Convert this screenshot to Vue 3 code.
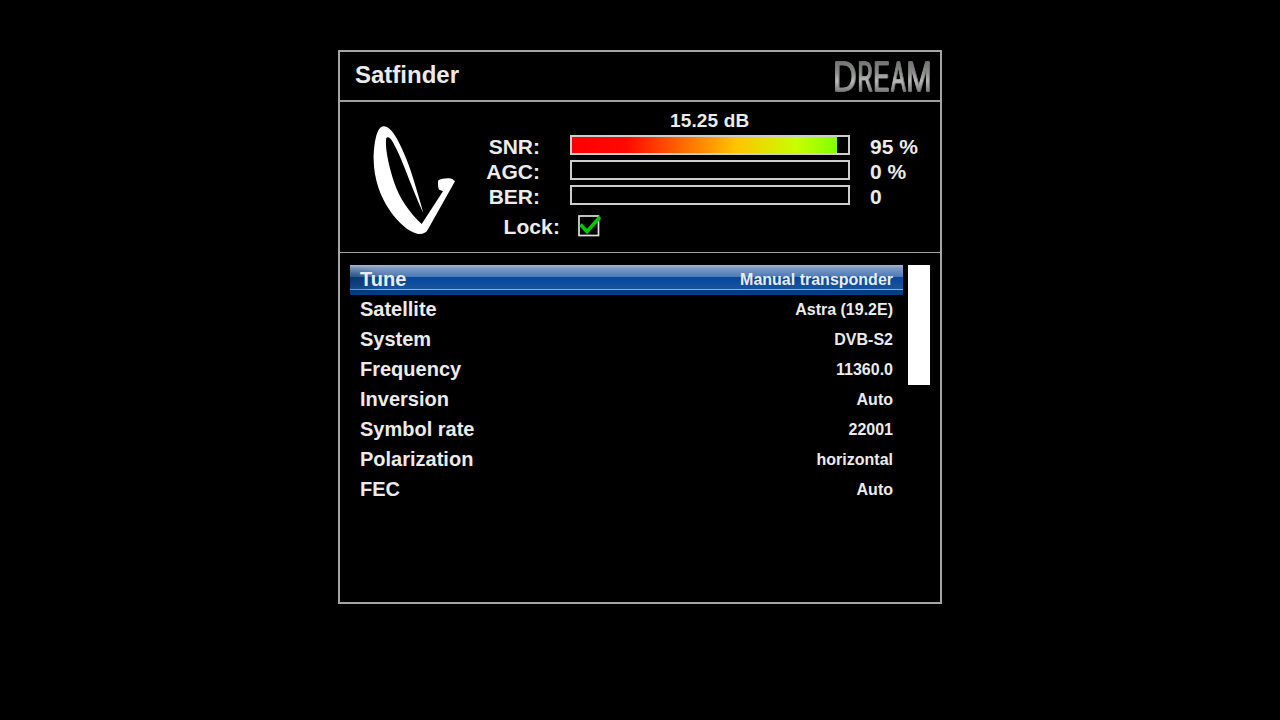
<script setup>
const signals = [
  { label: 'SNR:', level: 96, value: '95 %' },
  { label: 'AGC:', level: 0, value: '0 %' },
  { label: 'BER:', level: 0, value: '0' }
]

const settings = [
  { name: 'Tune', value: 'Manual transponder' },
  { name: 'Satellite', value: 'Astra (19.2E)' },
  { name: 'System', value: 'DVB-S2' },
  { name: 'Frequency', value: '11360.0' },
  { name: 'Inversion', value: 'Auto' },
  { name: 'Symbol rate', value: '22001' },
  { name: 'Polarization', value: 'horizontal' },
  { name: 'FEC', value: 'Auto' }
]

// letters of the logo have uneven widths
const letters = [
  { char: 'D', x: 3.5, width: 24 },
  { char: 'R', x: 28, width: 15 },
  { char: 'E', x: 43.5, width: 17 },
  { char: 'A', x: 61.5, width: 15 },
  { char: 'M', x: 77, width: 25 }
]

const selected = 0
</script>

<template>
  <div class="screen">
    <main class="window">
      <header class="title-bar">
        <h1>Satfinder</h1>
        <svg class="logo" width="106" height="46" viewBox="0 0 106 46">
          <defs>
            <linearGradient id="metal" gradientUnits="userSpaceOnUse" x1="0" y1="6" x2="0" y2="40">
              <stop offset="0" stop-color="#6c6e6c" />
              <stop offset="0.4" stop-color="#8c8e8c" />
              <stop offset="0.65" stop-color="#b8bab8" />
              <stop offset="1" stop-color="#707270" />
            </linearGradient>
          </defs>
          <text
            v-for="l in letters"
            :key="l.char"
            :x="l.x"
            y="37.5"
            :textLength="l.width"
            lengthAdjust="spacingAndGlyphs"
          >{{ l.char }}</text>
        </svg>
      </header>

      <section class="signal">
        <svg class="dish" width="110" height="130" viewBox="0 0 330 390">
          <path
            fill="#fff"
            fill-rule="evenodd"
            d="M70 34 C84 34 98 48 110 70 C134 114 150 158 161 195 C171 229 181 260 190 294 C176 265 162 231 148 195 C132 153 117 113 98 80 C91 68 78 60 78 76 C76 108 88 158 102 201 C119 251 147 291 185 327 L249 229 C245 225 239 227 236 222 C234 214 233 202 235 196 C243 190 269 188 277 192 L285 199 L204 343 C198 354 190 358 174 357 C145 351 113 321 91 289 C60 244 42 191 41 135 C41 91 49 35 70 34Z"
          />
        </svg>
        <div class="meters">
          <div class="level">15.25 dB</div>
          <div v-for="item in signals" :key="item.label" class="meter-row">
            <label>{{ item.label }}</label>
            <div class="bar">
              <div class="bar-fill" :style="{ width: item.level + '%' }"></div>
            </div>
            <span class="reading">{{ item.value }}</span>
          </div>
          <div class="lock-row">
            <label>Lock:</label>
            <svg width="26" height="24" viewBox="0 0 26 24">
              <rect x="2" y="3" width="19.5" height="19.5" fill="none" stroke="#e0e0e0" stroke-width="1.7" />
              <path d="M3.5 11.5 L10 18.5 L23 4" fill="none" stroke="#00c800" stroke-width="3.6" />
            </svg>
          </div>
        </div>
      </section>

      <section class="config">
        <ul>
          <li v-for="(item, i) in settings" :key="item.name" :class="{ active: i === selected }">
            <span class="name">{{ item.name }}</span>
            <span class="value">{{ item.value }}</span>
          </li>
        </ul>
        <div class="scrollbar"></div>
      </section>
    </main>
  </div>
</template>

<style>
body {
  background: #000;
}
</style>

<style scoped>
.screen {
  box-sizing: border-box;
  height: 720px;
  padding-top: 50px;
  background: #000;
  color: #ebebeb;
  font-family: "Liberation Sans", Arial, sans-serif;
  font-weight: bold;
}
.window {
  box-sizing: border-box;
  width: 604px;
  height: 554px;
  margin: 0 auto;
  border: 2px solid #a5a5a5;
}
.title-bar {
  display: flex;
  justify-content: space-between;
  height: 48px;
  padding: 0 5px 0 15px;
  border-bottom: 2px solid #a0a0a0;
}
h1 {
  margin: 0;
  font-size: 24px;
  line-height: 46px;
}
.logo {
  margin-top: 1px;
  overflow: visible;
  filter: drop-shadow(1px 0.5px 0.5px #777);
}
.logo text {
  font-family: Inter, "Liberation Sans", sans-serif;
  font-size: 40px;
  font-weight: 300;
  fill: url(#metal);
  stroke: url(#metal);
  stroke-width: 1.4px;
  stroke-linejoin: round;
}
.signal {
  box-sizing: border-box;
  display: flex;
  height: 151px;
  padding-left: 20px;
  border-bottom: 1px solid #a0a0a0;
}
.dish {
  margin-top: 13px;
}
.meters {
  width: 470px;
}
.level {
  height: 31px;
  padding-left: 200px;
  font-size: 19px;
  line-height: 38px;
  letter-spacing: 0.15px;
}
.meter-row {
  display: flex;
  height: 25px;
  font-size: 21px;
  line-height: 28px;
}
.meter-row label {
  width: 70px;
  margin-right: 30px;
  text-align: right;
}
.bar {
  box-sizing: border-box;
  width: 280px;
  height: 20px;
  margin: 2px 20px 0 0;
  border: 2px solid #cdcdcd;
}
.bar-fill {
  height: 100%;
  background: linear-gradient(90deg, #f00 0, #ff0800 54px, #ffc400 164px, #c8ff00 224px, #80ff00 266px) no-repeat;
  background-size: 276px 100%;
}
.lock-row {
  display: flex;
  padding-top: 5px;
  font-size: 21px;
  line-height: 28px;
}
.lock-row label {
  width: 90px;
  margin-right: 17px;
  text-align: right;
  letter-spacing: 0.1px;
}
.config {
  display: flex;
  gap: 5px;
  padding: 12px 10px;
}
ul {
  width: 553px;
  margin: 0;
  padding: 0;
  list-style: none;
}
li {
  display: flex;
  justify-content: space-between;
  height: 30px;
  padding: 0 10px;
  font-size: 20px;
  line-height: 29px;
}
.value {
  font-size: 16px;
}
.active {
  background:
    radial-gradient(ellipse 36px 14px at 0 15px, rgba(16, 40, 72, 0.6), rgba(16, 40, 72, 0)),
    linear-gradient(
      #b0bdd4 0, #9aacca 1px, #7f9bc4 3px, #4a78b4 12px,
      #004a9c 12px, #1c529c 24px,
      #9aaed0 24px, #9aaed0 25px,
      #003c80 25px, #003c80 30px
    );
}
.scrollbar {
  width: 22px;
  height: 120px;
  background: #fff;
}
</style>
